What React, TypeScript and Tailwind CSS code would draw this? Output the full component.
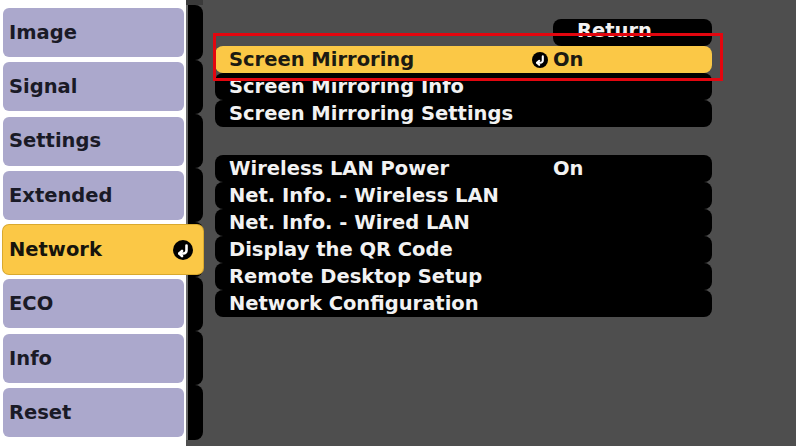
import React from "react";

const font = { fontFamily: '"DejaVu Sans", "Liberation Sans", sans-serif' };

function ReturnIcon({ size }: { size: number }) {
  return (
    <svg width={size} height={size} viewBox="0 0 20 20">
      <circle cx="10" cy="10" r="10" fill="#000" />
      <path d="M13.5 5.5 V10.5 A3 3 0 0 1 10.5 13.5 H6.5" fill="none" stroke="#fff" strokeWidth="2.6" strokeLinecap="round" />
      <path d="M9 11 L6.3 13.5 L9 16" fill="none" stroke="#fff" strokeWidth="2.6" strokeLinecap="round" strokeLinejoin="round" />
    </svg>
  );
}

const tabs = ["Image", "Signal", "Settings", "Extended", "Network", "ECO", "Info", "Reset"];

function Row({ label, value, selected }: { label: string; value?: string; selected?: boolean }) {
  return (
    <div
      className={
        "flex h-[27px] items-center rounded-lg pl-[14px] text-[19.5px] font-bold leading-none " +
        (selected ? "bg-[#fbc846] text-[#1c1a12]" : "bg-black text-[#f2f2f2]")
      }
    >
      <span className="w-[288px] shrink-0 whitespace-nowrap">{label}</span>
      <span className="flex w-[36px] shrink-0 justify-end pr-[5px]">{selected ? <ReturnIcon size={16} /> : null}</span>
      <span className="whitespace-nowrap">{value}</span>
    </div>
  );
}

export default function App() {
  return (
    <div className="relative flex h-[446px] w-[796px] overflow-hidden bg-[#4e4e4e]" style={font}>
      {/* Left menu */}
      <div className="flex w-[203px] shrink-0 flex-col">
        <div className="flex h-[5.3px] shrink-0">
          <div className="w-[186px] bg-white" />
          <div className="flex-1 bg-[#3a3a3a]" />
        </div>
        {tabs.map((t) => {
          const sel = t === "Network";
          return (
            <div key={t} className="flex h-[54.3px] shrink-0">
              <div className="flex w-[186px] shrink-0 items-center bg-white pl-[3px]">
                {sel ? (
                  <div className="relative z-10 flex h-[49px] w-[200px] shrink-0 items-center justify-between rounded-md bg-[#fbc846] pl-[6px] pr-[10px] text-[19.5px] font-bold text-[#16140c] shadow-[0_0_0_1px_#d9a92e]">
                    <span>{t}</span>
                    <ReturnIcon size={20} />
                  </div>
                ) : (
                  <div className="flex h-[49px] w-[181px] shrink-0 items-center rounded-md bg-[#aba8cc] pl-[6px] text-[19.5px] font-bold text-[#1a1a26]">
                    {t}
                  </div>
                )}
              </div>
              <div className="w-[17px] shrink-0 rounded-r-lg border-l-2 border-[#6a6a6a] bg-black" />
            </div>
          );
        })}
        <div className="flex flex-1">
          <div className="w-[186px] bg-white" />
          <div className="flex-1 bg-[#4e4e4e]" />
        </div>
      </div>

      {/* Right panel */}
      <div className="flex flex-1 flex-col pl-[12px] pr-[84px] pt-[19px]">
        <div className="flex justify-end">
          <div className="h-[27px] w-[159px] rounded-lg bg-black pl-[24px] pt-[1px] text-[19.5px] font-bold leading-[22px] text-[#f2f2f2]">
            Return
          </div>
        </div>
        <div className="flex flex-col">
          <Row label="Screen Mirroring" value="On" selected />
          <Row label="Screen Mirroring Info" />
          <Row label="Screen Mirroring Settings" />
        </div>
        <div className="mt-[28px] flex flex-col">
          <Row label="Wireless LAN Power" value="On" />
          <Row label="Net. Info. - Wireless LAN" />
          <Row label="Net. Info. - Wired LAN" />
          <Row label="Display the QR Code" />
          <Row label="Remote Desktop Setup" />
          <Row label="Network Configuration" />
        </div>
      </div>

      {/* Red highlight annotation */}
      <div className="pointer-events-none absolute left-[213px] top-[33px] h-[48px] w-[510px] border-[3px] border-[#e3060f]" />
    </div>
  );
}
